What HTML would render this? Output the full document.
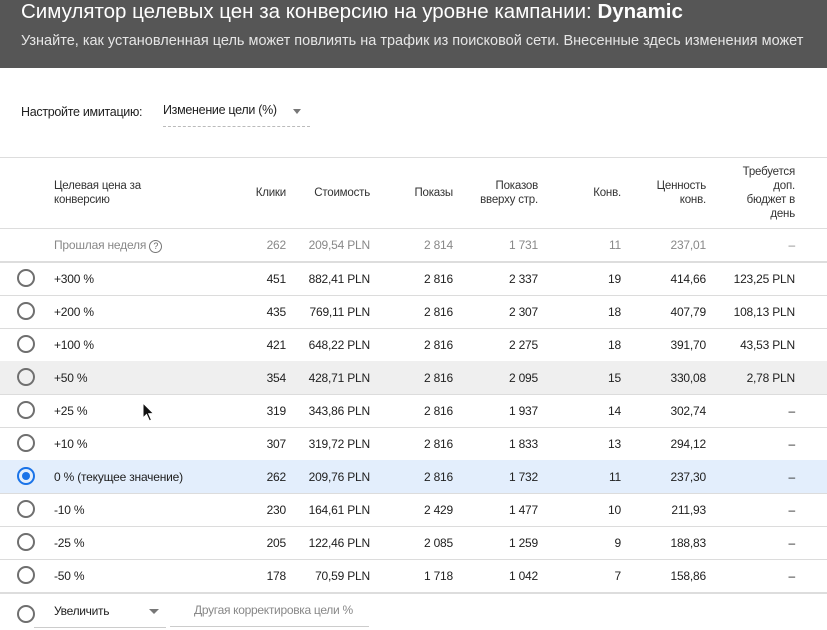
<!DOCTYPE html>
<html><head><meta charset="utf-8"><style>
body{margin:0;width:827px;height:630px;overflow:hidden;background:#fff;font-family:"Liberation Sans",sans-serif;color:#212121;position:relative}
.hdr{position:absolute;left:0;top:0;width:827px;height:68px;background:#565656;color:#fff;overflow:hidden;white-space:nowrap}
.t{position:absolute;left:21px;top:0px;font-size:20.5px;letter-spacing:0px}
.s{position:absolute;left:21px;top:33px;font-size:14.5px;color:#e6e6e6;letter-spacing:0px}
.a{position:absolute;font-size:12.5px;letter-spacing:-0.3px;white-space:nowrap}
.row{position:absolute;left:0;width:827px;height:33px;border-bottom:1px solid #dcdcdc;font-size:12px;letter-spacing:-0.2px}
.row span{position:absolute;top:10px;white-space:nowrap}
.c0{left:54px}
.c1{right:541px}.c2{right:457px}.c3{right:374px}.c4{right:289px}.c5{right:206px}.c6{right:121px}.c7{right:32px}
.r{position:absolute;left:17px;top:7px;width:18px;height:18px;border:2px solid #6f6f6f;border-radius:50%;box-sizing:border-box}
.h{position:absolute;font-size:11.5px;color:#333;line-height:14px;text-align:right;letter-spacing:-0.2px}
</style></head><body>
<div class="hdr"><div class="t">Симулятор целевых цен за конверсию на уровне кампании: <b>Dynamic</b></div>
<div class="s">Узнайте, как установленная цель может повлиять на трафик из поисковой сети. Внесенные здесь изменения может</div></div>
<div class="a" style="left:21px;top:105px">Настройте имитацию:</div>
<div class="a" style="left:163px;top:103px">Изменение цели (%)</div>
<div style="position:absolute;left:293px;top:109px;width:0;height:0;border-left:4px solid transparent;border-right:4px solid transparent;border-top:5px solid #777"></div>
<div style="position:absolute;left:163px;top:126px;width:147px;border-top:1px dashed #bbb"></div>
<div style="position:absolute;left:0;top:157px;width:827px;border-top:1px solid #ddd"></div>
<div class="h" style="left:54px;top:179px;text-align:left">Целевая цена за<br>конверсию</div>
<div class="h" style="right:541px;top:186px">Клики</div>
<div class="h" style="right:457px;top:186px">Стоимость</div>
<div class="h" style="right:374px;top:186px">Показы</div>
<div class="h" style="right:289px;top:179px">Показов<br>вверху стр.</div>
<div class="h" style="right:206px;top:186px">Конв.</div>
<div class="h" style="right:121px;top:179px">Ценность<br>конв.</div>
<div class="h" style="right:32px;top:165px">Требуется<br>доп.<br>бюджет в<br>день</div>
<div style="position:absolute;left:0;top:228px;width:827px;border-top:1px solid #ddd"></div>
<div class="row" style="top:229px;height:32px;border-bottom:2px solid #ddd;color:#888"><span class="c0" style="top:9px">Прошлая неделя <span style="position:relative;display:inline-block;width:11px;height:11px;border:1px solid #777;border-radius:50%;font-size:9px;text-align:center;line-height:11px;color:#666;top:0">?</span></span><span class="c1" style="top:9px">262</span><span class="c2" style="top:9px">209,54 PLN</span><span class="c3" style="top:9px">2 814</span><span class="c4" style="top:9px">1 731</span><span class="c5" style="top:9px">11</span><span class="c6" style="top:9px">237,01</span><span class="c7" style="top:9px">–</span></div>
<div class="row" style="top:262px"><i class="r"></i><span class="c0">+300 %</span><span class="c1">451</span><span class="c2">882,41 PLN</span><span class="c3">2 816</span><span class="c4">2 337</span><span class="c5">19</span><span class="c6">414,66</span><span class="c7">123,25 PLN</span></div>
<div class="row" style="top:295px"><i class="r"></i><span class="c0">+200 %</span><span class="c1">435</span><span class="c2">769,11 PLN</span><span class="c3">2 816</span><span class="c4">2 307</span><span class="c5">18</span><span class="c6">407,79</span><span class="c7">108,13 PLN</span></div>
<div class="row" style="top:328px"><i class="r"></i><span class="c0">+100 %</span><span class="c1">421</span><span class="c2">648,22 PLN</span><span class="c3">2 816</span><span class="c4">2 275</span><span class="c5">18</span><span class="c6">391,70</span><span class="c7">43,53 PLN</span></div>
<div class="row" style="top:361px;background:#efefef"><i class="r"></i><span class="c0">+50 %</span><span class="c1">354</span><span class="c2">428,71 PLN</span><span class="c3">2 816</span><span class="c4">2 095</span><span class="c5">15</span><span class="c6">330,08</span><span class="c7">2,78 PLN</span></div>
<div class="row" style="top:394px"><i class="r"></i><span class="c0">+25 %</span><span class="c1">319</span><span class="c2">343,86 PLN</span><span class="c3">2 816</span><span class="c4">1 937</span><span class="c5">14</span><span class="c6">302,74</span><span class="c7">–</span></div>
<div class="row" style="top:427px"><i class="r"></i><span class="c0">+10 %</span><span class="c1">307</span><span class="c2">319,72 PLN</span><span class="c3">2 816</span><span class="c4">1 833</span><span class="c5">13</span><span class="c6">294,12</span><span class="c7">–</span></div>
<div class="row" style="top:460px;background:#e3eefc"><i class="r" style="border-color:#1a73e8"><i style="position:absolute;left:3px;top:3px;width:8px;height:8px;border-radius:50%;background:#1a73e8"></i></i><span class="c0">0 % (текущее значение)</span><span class="c1">262</span><span class="c2">209,76 PLN</span><span class="c3">2 816</span><span class="c4">1 732</span><span class="c5">11</span><span class="c6">237,30</span><span class="c7">–</span></div>
<div class="row" style="top:493px"><i class="r"></i><span class="c0">-10 %</span><span class="c1">230</span><span class="c2">164,61 PLN</span><span class="c3">2 429</span><span class="c4">1 477</span><span class="c5">10</span><span class="c6">211,93</span><span class="c7">–</span></div>
<div class="row" style="top:526px"><i class="r"></i><span class="c0">-25 %</span><span class="c1">205</span><span class="c2">122,46 PLN</span><span class="c3">2 085</span><span class="c4">1 259</span><span class="c5">9</span><span class="c6">188,83</span><span class="c7">–</span></div>
<div class="row" style="top:559px;border-bottom:2px solid #ddd"><i class="r"></i><span class="c0">-50 %</span><span class="c1">178</span><span class="c2">70,59 PLN</span><span class="c3">1 718</span><span class="c4">1 042</span><span class="c5">7</span><span class="c6">158,86</span><span class="c7">–</span></div>
<i class="r" style="top:605px"></i>
<div class="a" style="left:54px;top:604px;font-size:12px">Увеличить</div>
<div style="position:absolute;left:149px;top:609px;border-left:5px solid transparent;border-right:5px solid transparent;border-top:5px solid #777"></div>
<div style="position:absolute;left:34px;top:627px;width:132px;border-top:1px solid #ccc"></div>
<div class="a" style="left:194px;top:603px;font-size:12px;color:#888">Другая корректировка цели %</div>
<div style="position:absolute;left:170px;top:626px;width:199px;border-top:1px solid #ccc"></div>
<svg style="position:absolute;left:142px;top:402px" width="14" height="22" viewBox="0 0 14 22"><path d="M1 1 L1 16 L4.5 12.5 L7.5 19 L9.5 18 L6.7 11.7 L11.5 11.5 Z" fill="#111" stroke="#fff" stroke-width="1"/></svg>
</body></html>
